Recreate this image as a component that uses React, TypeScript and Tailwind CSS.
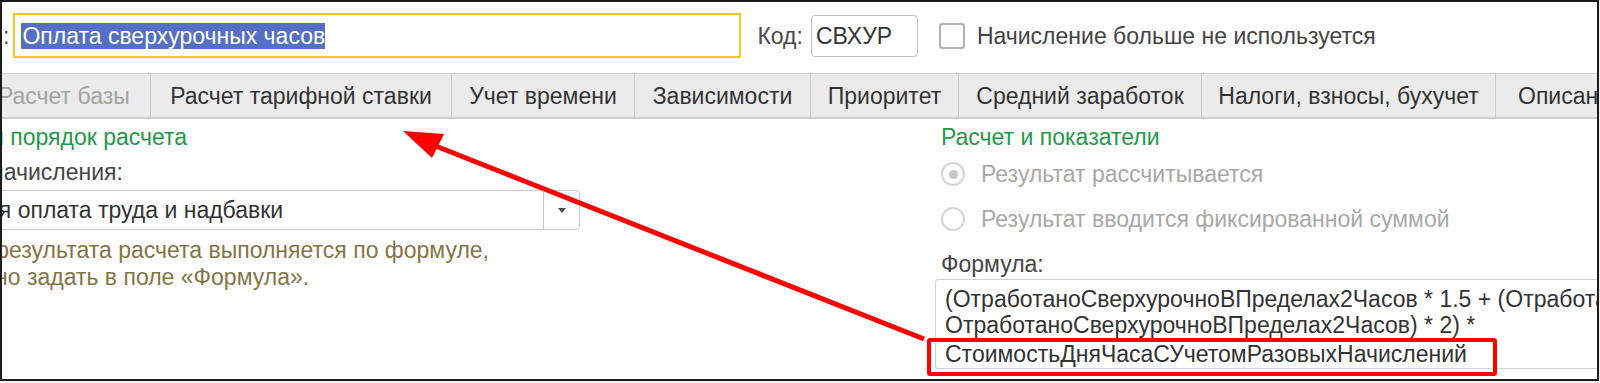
import React from 'react';

const tabs = [
  { label: 'Расчет базы', w: 'w-[174px] -ml-[25px] justify-start pl-[21px]', muted: true },
  { label: 'Расчет тарифной ставки', w: 'w-[301px] justify-center' },
  { label: 'Учет времени', w: 'w-[183px] justify-center' },
  { label: 'Зависимости', w: 'w-[176px] justify-center' },
  { label: 'Приоритет', w: 'w-[148px] justify-center' },
  { label: 'Средний заработок', w: 'w-[243px] justify-center' },
  { label: 'Налоги, взносы, бухучет', w: 'w-[294px] justify-center' },
  { label: 'Описание', w: 'w-[200px] justify-start pl-[22px]' },
];

function Radio({ checked, label }: { checked?: boolean; label: string }) {
  return (
    <div className="flex items-center h-[26px]">
      <span className="w-[24px] h-[24px] rounded-full border-2 border-[#d6d6d6] flex items-center justify-center shrink-0">
        {checked && <span className="w-[9px] h-[9px] rounded-full bg-[#c6c6c6]" />}
      </span>
      <span className="ml-[16px] text-[#a8a8a8]">{label}</span>
    </div>
  );
}

export default function App() {
  return (
    <div className="w-[1600px] h-[383px] bg-[#efefef] overflow-hidden relative font-['Liberation_Sans',Arial,sans-serif] text-[23px] leading-[26px] text-[#3a3a3a]">
      <div className="w-[1599px] h-[381px] border-2 border-[#1c1c1c] bg-white overflow-hidden flex flex-col">
        {/* header row */}
        <div className="flex items-center pt-[11px] h-[56px] shrink-0">
          <span className="ml-[1px] text-[#555]">:</span>
          <div className="ml-[4px] w-[728px] h-[45px] border-2 border-[#f5c71a] flex items-center pl-[6px]">
            <span className="w-[1px] h-[26px] bg-[#8a6d1c]" />
            <span className="bg-[#5470c6] text-white leading-[26px]">Оплата сверхурочных часов</span>
          </div>
          <span className="ml-[16px] text-[#4a4a4a]">Код:</span>
          <div className="ml-[8px] w-[107px] h-[42px] border border-[#c4c4c4] rounded-[4px] flex items-center pl-[4px] text-[#333]">
            СВХУР
          </div>
          <span className="ml-[21px] w-[26px] h-[26px] border-2 border-[#b0b0b0] rounded-[3px] shrink-0" />
          <span className="ml-[12px] text-[#444]">Начисление больше не используется</span>
        </div>

        {/* tabs */}
        <div className="mt-[15px] flex h-[46px] shrink-0 bg-[#ebebeb] border-t border-[#d6d6d6] border-b-2 border-b-[#cdcdcd]">
          {tabs.map((t) => (
            <div
              key={t.label}
              className={`${t.w} shrink-0 flex items-center border-r border-[#c9c9c9] whitespace-nowrap ${t.muted ? 'text-[#a3a3a3]' : 'text-[#333]'}`}
            >
              {t.label}
            </div>
          ))}
        </div>

        {/* body */}
        <div className="flex flex-1 pt-[5px]">
          <div className="w-[939px] shrink-0 flex flex-col overflow-hidden">
            <div className="-ml-[11px] text-[#1f9a47] whitespace-nowrap">и порядок расчета</div>
            <div className="mt-[9px] -ml-[11px] text-[#444] whitespace-nowrap">начисления:</div>
            <div className="mt-[5px] -ml-[12px] w-[590px] h-[40px] border border-[#c9c9c9] rounded-[4px] flex items-stretch">
              <div className="flex-1 flex items-center text-[#333] whitespace-nowrap overflow-hidden">
                <span className="-ml-[5px]">ая оплата труда и надбавки</span>
              </div>
              <div className="w-[36px] border-l border-[#c9c9c9] flex items-center justify-center">
                <svg width="8" height="5" viewBox="0 0 8 5">
                  <path d="M0 0h8L4 5z" fill="#4a4a4a" />
                </svg>
              </div>
            </div>
            <div className="mt-[7px] text-[#847545] whitespace-nowrap leading-[27px]">
              <div className="-ml-[25px]">е результата расчета выполняется по формуле,</div>
              <div className="-ml-[7px]">но задать в поле «Формула».</div>
            </div>
          </div>

          <div className="flex-1 flex flex-col min-w-0">
            <div className="text-[#1f9a47] whitespace-nowrap">Расчет и показатели</div>
            <div className="mt-[11px]">
              <Radio checked label="Результат рассчитывается" />
            </div>
            <div className="mt-[19px]">
              <Radio label="Результат вводится фиксированной суммой" />
            </div>
            <div className="mt-[19px] text-[#444]">Формула:</div>
            <div className="mt-[2px] -ml-[6px] w-[700px] h-[90px] border border-[#d2d2d2] rounded-[3px] pt-[6px] pl-[9px] text-[#333] whitespace-nowrap overflow-hidden">
              <div>(ОтработаноСверхурочноВПределах2Часов * 1.5 + (ОтработаноСверхурочно -</div>
              <div>ОтработаноСверхурочноВПределах2Часов) * 2) *</div>
              <div className="mt-[3px]">СтоимостьДняЧасаСУчетомРазовыхНачислений</div>
            </div>
          </div>
        </div>
      </div>

      {/* annotation: red frame + arrow */}
      <div className="absolute left-[927px] top-[338px] w-[570px] h-[38px] border-4 border-[#ff0000] rounded-[3px] pointer-events-none" />
      <svg className="absolute left-0 top-0 pointer-events-none" width="1600" height="383" viewBox="0 0 1600 383">
        <line x1="924" y1="339" x2="428" y2="143" stroke="#ff0000" strokeWidth="5" />
        <polygon points="403,131 444,134 432,158" fill="#ff0000" />
      </svg>
    </div>
  );
}
